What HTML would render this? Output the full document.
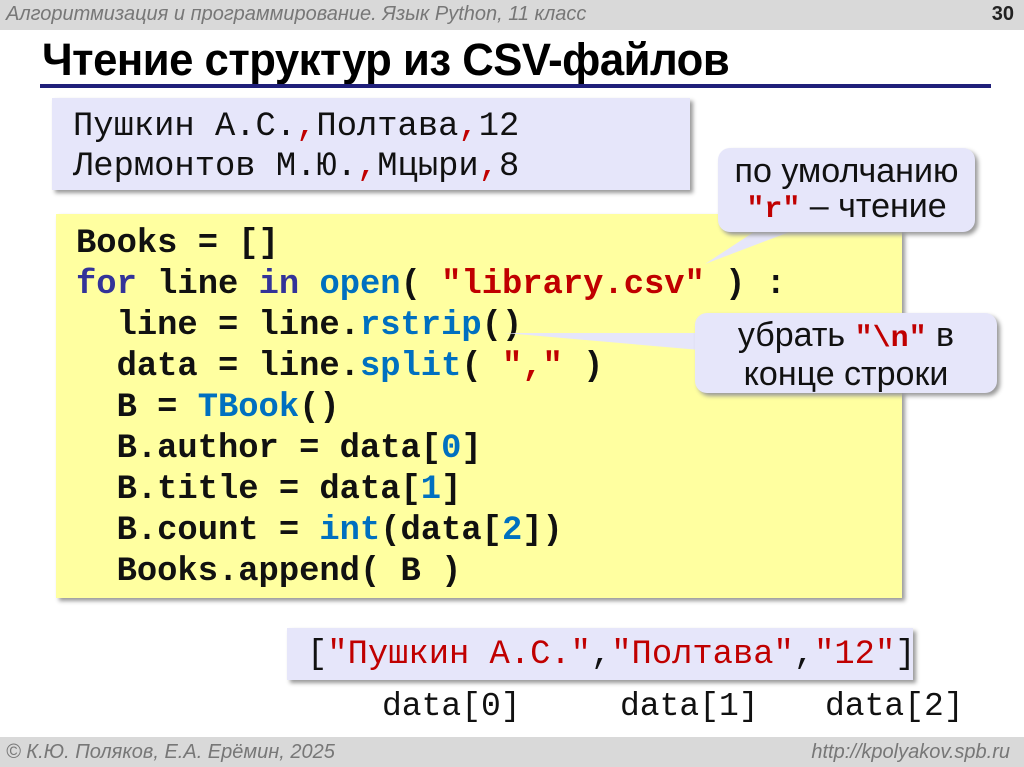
<!DOCTYPE html>
<html><head><meta charset="utf-8"><style>
body{margin:0;width:1024px;height:767px;position:relative;background:#fff;overflow:hidden;font-family:"Liberation Sans",sans-serif}
.hdr{position:absolute;left:0;top:0;width:1024px;height:30px;background:#d9d9d9}
.hdr .t{position:absolute;left:6px;top:3px;font-style:italic;font-size:20px;color:#777}
.hdr .n{position:absolute;right:10px;top:3px;font-weight:bold;font-size:20px;color:#222}
.title{position:absolute;left:42px;top:34px;font-weight:bold;font-size:45px;color:#000;letter-spacing:-0.5px;transform:scaleX(0.97);transform-origin:left}
.line{position:absolute;left:40px;top:84px;width:951px;height:4px;background:#1f1f7a}
.mono{font-family:"Liberation Mono",monospace;white-space:pre}
.box1{position:absolute;left:52px;top:98px;width:638px;height:92px;background:#e6e6fa;box-shadow:3px 3px 4px #999}
.box1 div{position:absolute;left:21px;font-size:33.8px;color:#111}
.code{position:absolute;left:56px;top:214px;width:846px;height:384px;background:#ffffa0;box-shadow:3px 3px 4px #999}
.code div{position:absolute;left:20px;font-size:33.8px;font-weight:bold;color:#111;line-height:41px}
.k{color:#333399}.b{color:#0070c0}.s{color:#c00000}
.bub{position:absolute;background:#e6e6fa;border-radius:12px;box-shadow:3px 3px 4px #999;text-align:center;font-size:34px;line-height:35px;color:#111}
.box3{position:absolute;left:287px;top:628px;width:626px;height:52px;background:#e6e6fa;box-shadow:3px 3px 4px #999}
.ftr{position:absolute;left:0;top:737px;width:1024px;height:30px;background:#d9d9d9}
.ftr span{position:absolute;top:4px;font-style:italic;font-size:20px;color:#777}
</style></head><body>
<div class="hdr"><span class="t">Алгоритмизация и программирование. Язык Python, 11 класс</span><span class="n">30</span></div>
<div class="title">Чтение структур из CSV-файлов</div>
<div class="line"></div>
<div class="box1">
<div class="mono" style="top:10px">Пушкин А.С.<span class="s">,</span>Полтава<span class="s">,</span>12</div>
<div class="mono" style="top:50px">Лермонтов М.Ю.<span class="s">,</span>Мцыри<span class="s">,</span>8</div>
</div>
<div class="code">
<div class="mono" style="top:10px">Books = []</div>
<div class="mono" style="top:51px"><span class="k">for</span> line <span class="k">in</span> <span class="b">open</span>( <span class="s">"library.csv"</span> ) :</div>
<div class="mono" style="top:92px">  line = line.<span class="b">rstrip</span>()</div>
<div class="mono" style="top:133px">  data = line.<span class="b">split</span>( <span class="s">","</span> )</div>
<div class="mono" style="top:174px">  B = <span class="b">TBook</span>()</div>
<div class="mono" style="top:215px">  B.author = data[<span class="b">0</span>]</div>
<div class="mono" style="top:256px">  B.title = data[<span class="b">1</span>]</div>
<div class="mono" style="top:297px">  B.count = <span class="b">int</span>(data[<span class="b">2</span>])</div>
<div class="mono" style="top:338px">  Books.append( B )</div>
</div>
<svg style="position:absolute;left:0;top:0" width="1024" height="767">
<polygon points="705,264 760,228 800,228" fill="#e6e6fa"/>
<polygon points="505,333 700,333 700,350" fill="#e6e6fa" />
</svg>
<div class="bub" style="left:718px;top:148px;width:257px;height:84px;padding-top:6px;box-sizing:border-box">по умолчанию<br><span class="mono s" style="font-weight:bold;font-size:30px">"r"</span> – чтение</div>
<div class="bub" style="left:695px;top:313px;width:302px;height:80px;padding-top:5px;box-sizing:border-box">убрать <span class="mono s" style="font-weight:bold;font-size:30px">"\n"</span> в<br>конце строки</div>
<div class="box3"><div class="mono" style="position:absolute;left:20px;top:8px;font-size:33.8px;color:#111">[<span class="s">"Пушкин А.С."</span>,<span class="s">"Полтава"</span>,<span class="s">"12"</span>]</div></div>
<div class="mono" style="position:absolute;left:382px;top:688px;font-size:33px;color:#111">data[0]</div>
<div class="mono" style="position:absolute;left:620px;top:688px;font-size:33px;color:#111">data[1]</div>
<div class="mono" style="position:absolute;left:825px;top:688px;font-size:33px;color:#111">data[2]</div>
<div class="ftr"><span style="left:6px">© К.Ю. Поляков, Е.А. Ерёмин, 2025</span><span style="right:14px">http://kpolyakov.spb.ru</span></div>
</body></html>
